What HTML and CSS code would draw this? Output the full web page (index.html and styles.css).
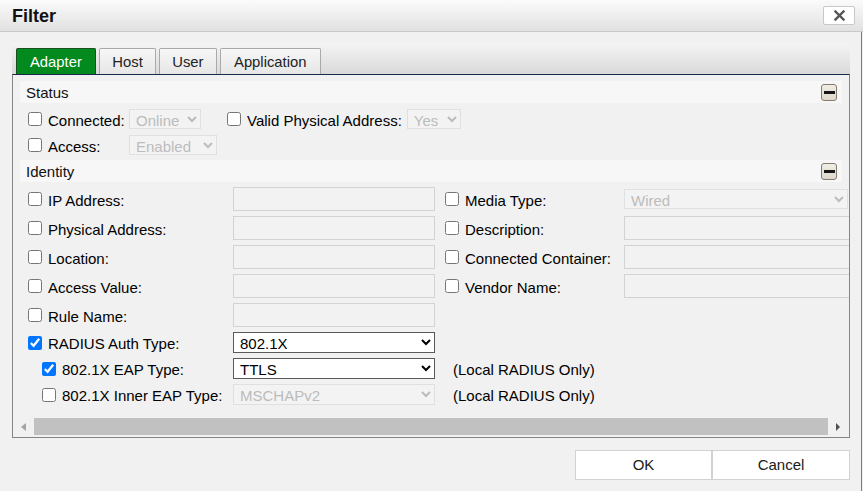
FILE: index.html
```html
<!DOCTYPE html>
<html>
<head>
<meta charset="utf-8">
<link rel="stylesheet" href="styles.css">
</head>
<body>
<div class="dialog">
  <div class="titlebar">
    <span class="title">Filter</span>
    <button class="close" type="button" aria-label="Close">
      <svg width="11" height="11" viewBox="0 0 11 11"><path d="M1.5 1.5 L9.5 9.5 M9.5 1.5 L1.5 9.5" stroke="#555" stroke-width="2.4" stroke-linecap="square"/></svg>
    </button>
  </div>
  <div class="content">
    <div class="tabs">
      <div class="tab active">Adapter</div>
      <div class="tab">Host</div>
      <div class="tab">User</div>
      <div class="tab tab-wide">Application</div>
    </div>
    <div class="panel">
      <div class="viewport">
        <div class="sect-head"><span>Status</span><span class="collapse"><span class="bar"></span></span></div>
        <div class="status-rows">
          <div class="srow">
            <input type="checkbox" class="cb">
            <span class="slabel txtlbl">Connected:</span>
            <select class="sel disabled w-online" disabled><option>Online</option></select>
            <input type="checkbox" class="cb cb-valid">
            <span class="slabel-inline txtlbl">Valid Physical Address:</span>
            <select class="sel disabled w-yes" disabled><option>Yes</option></select>
          </div>
          <div class="srow">
            <input type="checkbox" class="cb">
            <span class="slabel txtlbl">Access:</span>
            <select class="sel disabled w-enabled" disabled><option>Enabled</option></select>
          </div>
        </div>
        <div class="sect-head sect-gap"><span>Identity</span><span class="collapse"><span class="bar"></span></span></div>
        <div class="identity">
          <label class="lcell"><input type="checkbox" class="cb"><span class="txtlbl">IP Address:</span></label>
          <input type="text" class="txt" disabled>
          <label class="lcell rcell"><input type="checkbox" class="cb"><span class="txtlbl">Media Type:</span></label>
          <select class="sel disabled w-media" disabled><option>Wired</option></select>

          <label class="lcell"><input type="checkbox" class="cb"><span class="txtlbl">Physical Address:</span></label>
          <input type="text" class="txt" disabled>
          <label class="lcell rcell"><input type="checkbox" class="cb"><span class="txtlbl">Description:</span></label>
          <input type="text" class="txt wide" disabled>

          <label class="lcell"><input type="checkbox" class="cb"><span class="txtlbl">Location:</span></label>
          <input type="text" class="txt" disabled>
          <label class="lcell rcell"><input type="checkbox" class="cb"><span class="txtlbl">Connected Container:</span></label>
          <input type="text" class="txt wide" disabled>

          <label class="lcell"><input type="checkbox" class="cb"><span class="txtlbl">Access Value:</span></label>
          <input type="text" class="txt" disabled>
          <label class="lcell rcell"><input type="checkbox" class="cb"><span class="txtlbl">Vendor Name:</span></label>
          <input type="text" class="txt wide" disabled>

          <label class="lcell"><input type="checkbox" class="cb"><span class="txtlbl">Rule Name:</span></label>
          <input type="text" class="txt" disabled>
          <span></span><span></span>

          <label class="lcell"><input type="checkbox" class="cb" checked><span class="txtlbl">RADIUS Auth Type:</span></label>
          <select class="sel active-sel"><option>802.1X</option></select>
          <span></span><span></span>

          <label class="lcell indent"><input type="checkbox" class="cb" checked><span class="txtlbl">802.1X EAP Type:</span></label>
          <select class="sel active-sel"><option>TTLS</option></select>
          <span class="note txtlbl">(Local RADIUS Only)</span><span></span>

          <label class="lcell indent"><input type="checkbox" class="cb"><span class="txtlbl">802.1X Inner EAP Type:</span></label>
          <select class="sel disabled inner-sel" disabled><option>MSCHAPv2</option></select>
          <span class="note txtlbl">(Local RADIUS Only)</span><span></span>
        </div>
      </div>
      <div class="hscroll">
        <div class="sbtn left"><span class="tri-left"></span></div>
        <div class="thumb"></div>
        <div class="sbtn right"><span class="tri-right"></span></div>
      </div>
    </div>
    <div class="footer">
      <button type="button" class="btn">OK</button>
      <button type="button" class="btn">Cancel</button>
    </div>
  </div>
</div>
</body>
</html>
```

FILE: styles.css
```css
* { box-sizing: border-box; }
html, body { margin: 0; padding: 0; }
body {
  width: 863px;
  height: 491px;
  overflow: hidden;
  background: #f1f1f1;
  font-family: "Liberation Sans", Arial, sans-serif;
  font-size: 15px;
  color: #000;
}
.dialog { width: 863px; height: 491px; display: flex; flex-direction: column; }

.titlebar {
  height: 32px;
  flex: none;
  border-bottom: 1px solid #c9c9c9;
  background: linear-gradient(#fbfbfb, #e1e1e1);
  display: flex;
  align-items: center;
  justify-content: space-between;
  padding: 0 8px 0 12px;
}
.title { font-weight: bold; font-size: 18px; color: #111; padding-top: 1px; }
.close {
  width: 32px;
  height: 19px;
  margin-top: -1px;
  padding: 0;
  border: 1px solid #c8c8c8;
  border-radius: 2px;
  background: #fff;
  display: flex;
  align-items: center;
  justify-content: center;
}

.content {
  flex: 1;
  width: 862px;
  border-right: 1px solid #7c7c7c;
  padding: 11px 11px 0 12px;
}

.tabs {
  height: 31px;
  background: linear-gradient(#f4f4f4, #d9d9d9);
  display: flex;
  align-items: flex-end;
  padding-left: 4px;
  gap: 3px;
}
.tab {
  height: 26px;
  padding: 0 12px;
  border: 1px solid #a9a9a9;
  border-bottom: none;
  border-radius: 2px 2px 0 0;
  background: linear-gradient(#f7f7f7, #e6e6e6);
  color: #222;
  line-height: 27px;
  font-size: 14.8px;
}
.tab.active {
  padding: 0 13px;
  background: #028a1f;
  border-color: #17501e;
  color: #fff;
}
.tab + .tab { margin-left: 0.5px; }
.tab.tab-wide { padding: 0 14px 0 13px; }

.panel {
  height: 364px;
  border: 1px solid #858585;
  border-top-color: #16294a;
}
.viewport {
  height: 343px;
  overflow: hidden;
  padding: 6px 7px 0 7px;
}
.txtlbl { padding-top: 2px; }
.sect-head {
  height: 22px;
  background: #f7f7f7;
  display: flex;
  align-items: center;
  justify-content: space-between;
  padding: 0 5px 0 6px;
  color: #111;
}
.sect-gap { margin-top: 5px; }
.collapse {
  width: 16px;
  height: 17px;
  border: 1px solid #847b6d;
  border-radius: 3px;
  background: linear-gradient(#f1eee6, #ddd8cb);
  display: flex;
  align-items: center;
  justify-content: center;
}
.collapse .bar { width: 11px; height: 3px; background: #161616; }

.status-rows {
  margin-top: 6px;
  padding-left: 8px;
  display: flex;
  flex-direction: column;
  gap: 6px;
}
.srow { height: 20px; display: flex; align-items: center; }
.cb { width: 14px; height: 14px; margin: 0; flex: none; }
.slabel { width: 81px; margin-left: 6px; }
.cb-valid { margin-left: 26px; }
.slabel-inline { margin-left: 6px; margin-right: 5px; }

.sel {
  font-family: inherit;
  font-size: 15px;
  border-radius: 0;
  padding: 1px 0 0 2px;
  margin: 0;
}
.sel.disabled {
  height: 20px;
  border: 1px solid #dadada;
  background: #f4f4f4;
  color: #a6a6a6;
}
.w-online { width: 72px; }
.w-yes { width: 54px; }
.w-enabled { width: 88px; }
.w-media { width: 224px; align-self: center; }

.identity {
  margin-top: 5px;
  padding-left: 8px;
  display: grid;
  grid-template-columns: 205px 202px 189px 260px;
  grid-template-rows: 24px 24px 24px 24px 24px 21px 21px 21px;
  row-gap: 5px;
  align-items: center;
}
.lcell { display: flex; align-items: center; gap: 6px; }
.rcell { padding-left: 10px; }
.indent { padding-left: 14px; }
.txt {
  width: 202px;
  height: 24px;
  margin: 0;
  border: 1px solid #d3d3d3;
  background: #f2f2f2;
  border-radius: 0;
}
.txt.wide { width: 260px; }
.active-sel {
  width: 202px;
  height: 21px;
  border: 1px solid #5a5a5a;
  background: #fff;
  color: #000;
}
.inner-sel.disabled { width: 202px; height: 21px; }
.note { padding-left: 18px; }

.hscroll { height: 17px; display: flex; margin-bottom: 2px; }
.sbtn { width: 21px; height: 17px; display: flex; align-items: center; padding-left: 8px; }
.thumb { flex: 1; background: #c1c1c1; }
.tri-left {
  width: 0; height: 0;
  border-top: 4.5px solid transparent;
  border-bottom: 4.5px solid transparent;
  border-right: 5px solid #a3a3a3;
}
.tri-right {
  width: 0; height: 0;
  border-top: 4px solid transparent;
  border-bottom: 4px solid transparent;
  border-left: 4px solid #505050;
}

.footer {
  margin-top: 12px;
  display: flex;
  justify-content: flex-end;
}
.btn {
  width: 137px;
  height: 30px;
  margin: 0;
  padding: 0 0 2px;
  border: 1px solid #d2d2d2;
  background: #fff;
  font-family: inherit;
  font-size: 15px;
  color: #1a1a1a;
}
.btn + .btn { width: 138px; }
```
